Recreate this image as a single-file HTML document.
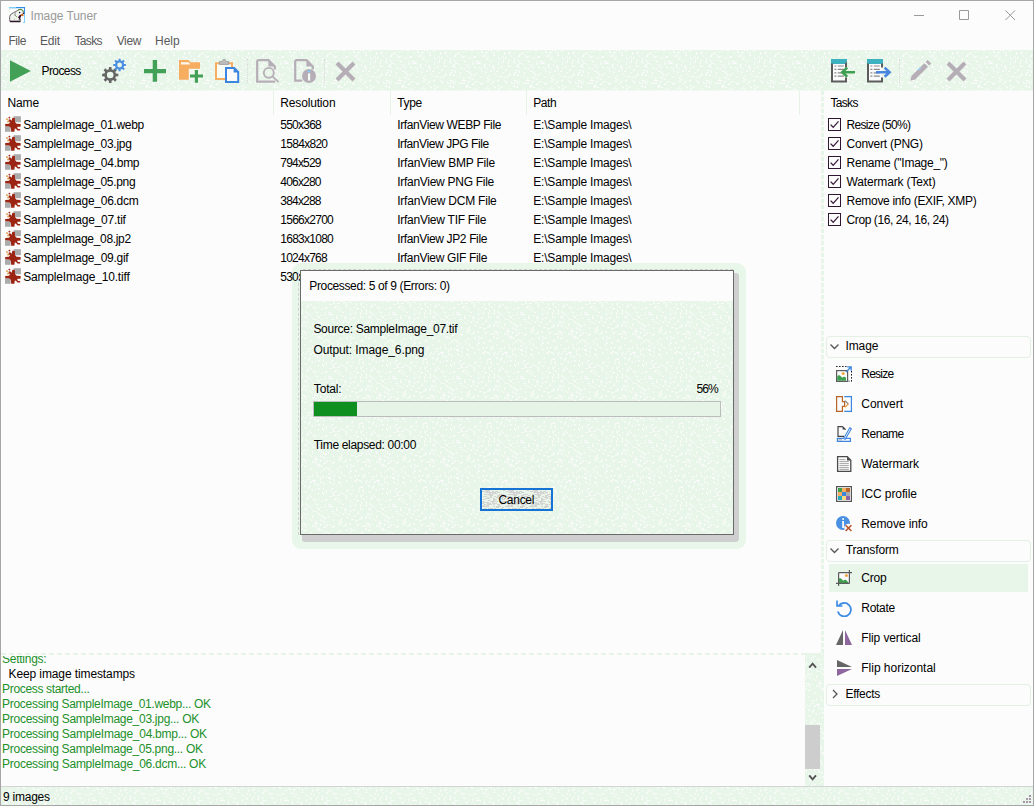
<!DOCTYPE html><html><head><meta charset="utf-8"><title>Image Tuner</title><style>
html,body{margin:0;padding:0}
body{width:1034px;height:806px;overflow:hidden;background:#fcfcfc;font-family:"Liberation Sans", sans-serif;font-size:12px;position:relative}
.a{position:absolute;display:block}
.t{position:absolute;white-space:pre;line-height:16px;height:16px;font-size:12px;color:#000}
.hdr{position:absolute;left:826px;width:205px;height:20px;border:1px solid #e3f1e4;border-radius:4px;box-sizing:border-box}
.cb{position:absolute;left:828px;width:13px;height:13px;box-sizing:border-box;border:1px solid #2e1530;background:#fcfcfc}

</style></head><body>
<svg width="0" height="0" style="position:absolute"><defs><pattern id="dz" width="64" height="64" patternUnits="userSpaceOnUse"><rect width="64" height="64" fill="#e8f6e9"/><path d="M0 12h1v1h-1zM0 24h1v1h-1zM0 36h1v1h-1zM0 53h1v1h-1zM1 3h1v1h-1zM1 8h1v1h-1zM1 9h1v1h-1zM1 10h1v1h-1zM1 11h1v1h-1zM1 12h1v1h-1zM1 22h1v1h-1zM1 24h1v1h-1zM1 25h1v1h-1zM1 30h1v1h-1zM1 32h1v1h-1zM1 33h1v1h-1zM1 35h1v1h-1zM1 36h1v1h-1zM1 52h1v1h-1zM1 54h1v1h-1zM2 20h1v1h-1zM2 22h1v1h-1zM2 30h1v1h-1zM2 51h1v1h-1zM3 16h1v1h-1zM3 20h1v1h-1zM3 22h1v1h-1zM3 30h1v1h-1zM3 31h1v1h-1zM3 37h1v1h-1zM3 44h1v1h-1zM3 56h1v1h-1zM3 57h1v1h-1zM4 15h1v1h-1zM4 16h1v1h-1zM4 20h1v1h-1zM4 24h1v1h-1zM4 25h1v1h-1zM4 31h1v1h-1zM4 32h1v1h-1zM4 34h1v1h-1zM4 36h1v1h-1zM4 37h1v1h-1zM4 43h1v1h-1zM4 52h1v1h-1zM4 57h1v1h-1zM4 62h1v1h-1zM4 63h1v1h-1zM5 6h1v1h-1zM5 10h1v1h-1zM5 11h1v1h-1zM5 14h1v1h-1zM5 15h1v1h-1zM5 16h1v1h-1zM5 25h1v1h-1zM5 33h1v1h-1zM5 47h1v1h-1zM5 52h1v1h-1zM5 63h1v1h-1zM6 4h1v1h-1zM6 5h1v1h-1zM6 6h1v1h-1zM6 11h1v1h-1zM6 13h1v1h-1zM6 17h1v1h-1zM6 20h1v1h-1zM6 21h1v1h-1zM6 22h1v1h-1zM6 31h1v1h-1zM6 48h1v1h-1zM7 4h1v1h-1zM7 13h1v1h-1zM7 48h1v1h-1zM7 50h1v1h-1zM7 58h1v1h-1zM7 59h1v1h-1zM8 2h1v1h-1zM8 4h1v1h-1zM8 13h1v1h-1zM8 47h1v1h-1zM8 50h1v1h-1zM8 56h1v1h-1zM8 57h1v1h-1zM8 58h1v1h-1zM9 3h1v1h-1zM9 26h1v1h-1zM9 40h1v1h-1zM9 47h1v1h-1zM9 52h1v1h-1zM9 53h1v1h-1zM10 3h1v1h-1zM10 14h1v1h-1zM10 27h1v1h-1zM10 39h1v1h-1zM10 53h1v1h-1zM10 60h1v1h-1zM11 17h1v1h-1zM11 22h1v1h-1zM11 23h1v1h-1zM11 24h1v1h-1zM11 32h1v1h-1zM11 33h1v1h-1zM11 45h1v1h-1zM11 46h1v1h-1zM11 47h1v1h-1zM11 51h1v1h-1zM11 60h1v1h-1zM11 61h1v1h-1zM12 5h1v1h-1zM12 6h1v1h-1zM12 7h1v1h-1zM12 18h1v1h-1zM12 33h1v1h-1zM12 51h1v1h-1zM12 52h1v1h-1zM13 18h1v1h-1zM13 30h1v1h-1zM13 32h1v1h-1zM13 51h1v1h-1zM13 52h1v1h-1zM13 54h1v1h-1zM14 6h1v1h-1zM14 7h1v1h-1zM14 10h1v1h-1zM14 27h1v1h-1zM14 29h1v1h-1zM14 30h1v1h-1zM14 33h1v1h-1zM14 51h1v1h-1zM14 54h1v1h-1zM14 55h1v1h-1zM14 59h1v1h-1zM14 60h1v1h-1zM15 6h1v1h-1zM15 11h1v1h-1zM15 18h1v1h-1zM15 28h1v1h-1zM15 30h1v1h-1zM15 33h1v1h-1zM15 43h1v1h-1zM15 44h1v1h-1zM16 1h1v1h-1zM16 11h1v1h-1zM16 14h1v1h-1zM16 19h1v1h-1zM16 30h1v1h-1zM16 31h1v1h-1zM16 36h1v1h-1zM16 44h1v1h-1zM16 46h1v1h-1zM16 47h1v1h-1zM16 55h1v1h-1zM16 56h1v1h-1zM17 0h1v1h-1zM17 15h1v1h-1zM17 16h1v1h-1zM17 21h1v1h-1zM17 35h1v1h-1zM17 36h1v1h-1zM17 37h1v1h-1zM17 47h1v1h-1zM17 55h1v1h-1zM17 59h1v1h-1zM17 60h1v1h-1zM18 16h1v1h-1zM18 20h1v1h-1zM18 21h1v1h-1zM18 35h1v1h-1zM18 37h1v1h-1zM18 59h1v1h-1zM19 14h1v1h-1zM19 26h1v1h-1zM19 27h1v1h-1zM19 31h1v1h-1zM19 32h1v1h-1zM19 36h1v1h-1zM19 43h1v1h-1zM19 49h1v1h-1zM19 50h1v1h-1zM19 52h1v1h-1zM19 53h1v1h-1zM20 18h1v1h-1zM20 21h1v1h-1zM20 22h1v1h-1zM20 23h1v1h-1zM20 31h1v1h-1zM20 37h1v1h-1zM20 42h1v1h-1zM20 47h1v1h-1zM20 53h1v1h-1zM21 0h1v1h-1zM21 7h1v1h-1zM21 8h1v1h-1zM21 17h1v1h-1zM21 27h1v1h-1zM21 28h1v1h-1zM21 37h1v1h-1zM21 48h1v1h-1zM21 63h1v1h-1zM22 0h1v1h-1zM22 23h1v1h-1zM22 24h1v1h-1zM22 25h1v1h-1zM22 40h1v1h-1zM22 41h1v1h-1zM22 47h1v1h-1zM22 48h1v1h-1zM22 53h1v1h-1zM22 54h1v1h-1zM22 55h1v1h-1zM22 59h1v1h-1zM22 60h1v1h-1zM23 0h1v1h-1zM23 12h1v1h-1zM23 14h1v1h-1zM23 28h1v1h-1zM23 29h1v1h-1zM23 33h1v1h-1zM23 34h1v1h-1zM23 40h1v1h-1zM24 1h1v1h-1zM24 7h1v1h-1zM24 11h1v1h-1zM24 13h1v1h-1zM24 24h1v1h-1zM24 25h1v1h-1zM24 34h1v1h-1zM24 38h1v1h-1zM25 6h1v1h-1zM25 7h1v1h-1zM25 17h1v1h-1zM25 25h1v1h-1zM25 32h1v1h-1zM25 39h1v1h-1zM25 47h1v1h-1zM25 48h1v1h-1zM25 61h1v1h-1zM25 62h1v1h-1zM25 63h1v1h-1zM26 6h1v1h-1zM26 17h1v1h-1zM26 31h1v1h-1zM26 32h1v1h-1zM26 39h1v1h-1zM27 11h1v1h-1zM27 13h1v1h-1zM27 23h1v1h-1zM27 24h1v1h-1zM27 39h1v1h-1zM27 40h1v1h-1zM27 44h1v1h-1zM27 48h1v1h-1zM28 3h1v1h-1zM28 11h1v1h-1zM28 13h1v1h-1zM28 31h1v1h-1zM28 40h1v1h-1zM28 41h1v1h-1zM28 44h1v1h-1zM28 45h1v1h-1zM28 48h1v1h-1zM28 49h1v1h-1zM28 53h1v1h-1zM28 61h1v1h-1zM29 3h1v1h-1zM29 11h1v1h-1zM29 13h1v1h-1zM29 32h1v1h-1zM29 48h1v1h-1zM29 49h1v1h-1zM29 50h1v1h-1zM29 53h1v1h-1zM29 54h1v1h-1zM29 62h1v1h-1zM30 12h1v1h-1zM30 13h1v1h-1zM30 17h1v1h-1zM30 37h1v1h-1zM30 42h1v1h-1zM30 43h1v1h-1zM30 59h1v1h-1zM30 62h1v1h-1zM31 13h1v1h-1zM31 18h1v1h-1zM31 33h1v1h-1zM31 42h1v1h-1zM31 59h1v1h-1zM31 60h1v1h-1zM32 0h1v1h-1zM32 1h1v1h-1zM32 2h1v1h-1zM32 18h1v1h-1zM32 20h1v1h-1zM32 26h1v1h-1zM32 27h1v1h-1zM32 33h1v1h-1zM32 34h1v1h-1zM32 50h1v1h-1zM32 54h1v1h-1zM32 55h1v1h-1zM32 63h1v1h-1zM33 2h1v1h-1zM33 6h1v1h-1zM33 21h1v1h-1zM33 33h1v1h-1zM33 45h1v1h-1zM33 46h1v1h-1zM33 47h1v1h-1zM33 51h1v1h-1zM33 63h1v1h-1zM34 5h1v1h-1zM34 6h1v1h-1zM34 62h1v1h-1zM35 14h1v1h-1zM35 15h1v1h-1zM35 16h1v1h-1zM35 17h1v1h-1zM35 56h1v1h-1zM35 61h1v1h-1zM36 2h1v1h-1zM36 4h1v1h-1zM36 5h1v1h-1zM36 6h1v1h-1zM36 8h1v1h-1zM36 17h1v1h-1zM36 21h1v1h-1zM36 22h1v1h-1zM36 39h1v1h-1zM36 40h1v1h-1zM36 41h1v1h-1zM36 43h1v1h-1zM37 2h1v1h-1zM37 9h1v1h-1zM37 22h1v1h-1zM37 30h1v1h-1zM37 42h1v1h-1zM37 47h1v1h-1zM37 53h1v1h-1zM38 2h1v1h-1zM38 7h1v1h-1zM38 9h1v1h-1zM38 19h1v1h-1zM38 27h1v1h-1zM38 28h1v1h-1zM38 31h1v1h-1zM38 37h1v1h-1zM38 38h1v1h-1zM38 48h1v1h-1zM38 53h1v1h-1zM38 54h1v1h-1zM39 0h1v1h-1zM39 7h1v1h-1zM39 28h1v1h-1zM39 31h1v1h-1zM39 38h1v1h-1zM39 44h1v1h-1zM39 48h1v1h-1zM39 49h1v1h-1zM39 53h1v1h-1zM39 57h1v1h-1zM39 63h1v1h-1zM40 10h1v1h-1zM40 14h1v1h-1zM40 15h1v1h-1zM40 25h1v1h-1zM40 26h1v1h-1zM40 28h1v1h-1zM40 29h1v1h-1zM40 30h1v1h-1zM40 42h1v1h-1zM40 43h1v1h-1zM40 45h1v1h-1zM40 56h1v1h-1zM41 0h1v1h-1zM41 11h1v1h-1zM41 21h1v1h-1zM42 1h1v1h-1zM42 11h1v1h-1zM42 20h1v1h-1zM42 21h1v1h-1zM42 33h1v1h-1zM42 46h1v1h-1zM43 1h1v1h-1zM43 15h1v1h-1zM43 17h1v1h-1zM43 32h1v1h-1zM43 46h1v1h-1zM43 47h1v1h-1zM44 5h1v1h-1zM44 15h1v1h-1zM44 16h1v1h-1zM44 17h1v1h-1zM44 19h1v1h-1zM44 31h1v1h-1zM44 32h1v1h-1zM45 2h1v1h-1zM45 3h1v1h-1zM45 4h1v1h-1zM45 5h1v1h-1zM45 17h1v1h-1zM45 20h1v1h-1zM45 23h1v1h-1zM45 31h1v1h-1zM45 36h1v1h-1zM45 37h1v1h-1zM45 51h1v1h-1zM45 52h1v1h-1zM45 62h1v1h-1zM46 24h1v1h-1zM46 37h1v1h-1zM46 52h1v1h-1zM46 60h1v1h-1zM46 61h1v1h-1zM46 63h1v1h-1zM47 21h1v1h-1zM47 25h1v1h-1zM47 44h1v1h-1zM47 61h1v1h-1zM48 0h1v1h-1zM48 20h1v1h-1zM48 21h1v1h-1zM48 30h1v1h-1zM48 43h1v1h-1zM48 44h1v1h-1zM48 48h1v1h-1zM49 1h1v1h-1zM49 7h1v1h-1zM49 8h1v1h-1zM49 12h1v1h-1zM49 13h1v1h-1zM49 14h1v1h-1zM49 17h1v1h-1zM49 30h1v1h-1zM49 31h1v1h-1zM49 35h1v1h-1zM49 36h1v1h-1zM49 39h1v1h-1zM49 41h1v1h-1zM49 42h1v1h-1zM49 48h1v1h-1zM50 1h1v1h-1zM50 18h1v1h-1zM50 26h1v1h-1zM50 36h1v1h-1zM50 38h1v1h-1zM50 42h1v1h-1zM50 48h1v1h-1zM50 57h1v1h-1zM51 9h1v1h-1zM51 26h1v1h-1zM51 36h1v1h-1zM51 56h1v1h-1zM51 57h1v1h-1zM51 61h1v1h-1zM52 12h1v1h-1zM52 16h1v1h-1zM52 17h1v1h-1zM52 26h1v1h-1zM52 37h1v1h-1zM52 60h1v1h-1zM53 6h1v1h-1zM53 16h1v1h-1zM53 23h1v1h-1zM53 37h1v1h-1zM53 47h1v1h-1zM53 52h1v1h-1zM54 7h1v1h-1zM54 10h1v1h-1zM54 11h1v1h-1zM54 12h1v1h-1zM54 22h1v1h-1zM54 27h1v1h-1zM54 41h1v1h-1zM54 42h1v1h-1zM54 46h1v1h-1zM54 47h1v1h-1zM54 51h1v1h-1zM54 52h1v1h-1zM55 2h1v1h-1zM55 3h1v1h-1zM55 4h1v1h-1zM55 27h1v1h-1zM55 30h1v1h-1zM55 41h1v1h-1zM55 50h1v1h-1zM55 51h1v1h-1zM56 7h1v1h-1zM56 8h1v1h-1zM56 20h1v1h-1zM56 27h1v1h-1zM56 31h1v1h-1zM56 32h1v1h-1zM56 50h1v1h-1zM57 7h1v1h-1zM57 19h1v1h-1zM57 20h1v1h-1zM57 31h1v1h-1zM57 32h1v1h-1zM57 46h1v1h-1zM57 47h1v1h-1zM57 51h1v1h-1zM57 61h1v1h-1zM58 26h1v1h-1zM58 46h1v1h-1zM58 51h1v1h-1zM58 58h1v1h-1zM58 59h1v1h-1zM58 61h1v1h-1zM58 62h1v1h-1zM59 2h1v1h-1zM59 3h1v1h-1zM59 11h1v1h-1zM59 12h1v1h-1zM59 13h1v1h-1zM59 15h1v1h-1zM59 16h1v1h-1zM59 26h1v1h-1zM59 40h1v1h-1zM59 51h1v1h-1zM59 58h1v1h-1zM60 3h1v1h-1zM60 9h1v1h-1zM60 10h1v1h-1zM60 16h1v1h-1zM60 23h1v1h-1zM60 24h1v1h-1zM60 25h1v1h-1zM60 38h1v1h-1zM60 52h1v1h-1zM60 53h1v1h-1zM60 58h1v1h-1zM61 1h1v1h-1zM61 2h1v1h-1zM61 5h1v1h-1zM61 16h1v1h-1zM61 24h1v1h-1zM61 39h1v1h-1zM61 40h1v1h-1zM61 46h1v1h-1zM61 49h1v1h-1zM61 57h1v1h-1zM61 58h1v1h-1zM61 61h1v1h-1zM62 6h1v1h-1zM62 32h1v1h-1zM62 33h1v1h-1zM62 40h1v1h-1zM62 47h1v1h-1zM62 48h1v1h-1zM62 60h1v1h-1zM62 61h1v1h-1zM62 62h1v1h-1zM62 63h1v1h-1zM63 33h1v1h-1zM63 45h1v1h-1zM63 46h1v1h-1zM63 47h1v1h-1zM63 63h1v1h-1z" fill="#fbfbfb"/></pattern><pattern id="dg" width="24" height="24" patternUnits="userSpaceOnUse"><rect width="24" height="24" fill="#eaf5ea"/><path d="M0 1h1v1h-1zM0 11h1v1h-1zM0 13h1v1h-1zM0 16h1v1h-1zM0 19h1v1h-1zM0 20h1v1h-1zM0 22h1v1h-1zM1 1h1v1h-1zM1 6h1v1h-1zM1 9h1v1h-1zM1 11h1v1h-1zM1 12h1v1h-1zM1 13h1v1h-1zM1 15h1v1h-1zM1 16h1v1h-1zM1 19h1v1h-1zM1 20h1v1h-1zM1 21h1v1h-1zM2 1h1v1h-1zM2 4h1v1h-1zM2 6h1v1h-1zM2 9h1v1h-1zM2 12h1v1h-1zM2 14h1v1h-1zM2 15h1v1h-1zM2 16h1v1h-1zM2 18h1v1h-1zM2 19h1v1h-1zM2 20h1v1h-1zM2 21h1v1h-1zM2 23h1v1h-1zM3 0h1v1h-1zM3 2h1v1h-1zM3 4h1v1h-1zM3 6h1v1h-1zM3 8h1v1h-1zM3 12h1v1h-1zM3 14h1v1h-1zM3 16h1v1h-1zM3 18h1v1h-1zM3 19h1v1h-1zM3 20h1v1h-1zM3 23h1v1h-1zM4 0h1v1h-1zM4 1h1v1h-1zM4 2h1v1h-1zM4 4h1v1h-1zM4 6h1v1h-1zM4 8h1v1h-1zM4 12h1v1h-1zM4 15h1v1h-1zM4 16h1v1h-1zM4 20h1v1h-1zM5 0h1v1h-1zM5 1h1v1h-1zM5 2h1v1h-1zM5 4h1v1h-1zM5 7h1v1h-1zM5 8h1v1h-1zM5 12h1v1h-1zM5 13h1v1h-1zM5 14h1v1h-1zM5 15h1v1h-1zM5 16h1v1h-1zM5 19h1v1h-1zM5 20h1v1h-1zM6 0h1v1h-1zM6 1h1v1h-1zM6 2h1v1h-1zM6 4h1v1h-1zM6 7h1v1h-1zM6 8h1v1h-1zM6 10h1v1h-1zM6 12h1v1h-1zM6 13h1v1h-1zM6 14h1v1h-1zM6 15h1v1h-1zM6 16h1v1h-1zM6 18h1v1h-1zM6 19h1v1h-1zM6 20h1v1h-1zM7 0h1v1h-1zM7 1h1v1h-1zM7 2h1v1h-1zM7 3h1v1h-1zM7 4h1v1h-1zM7 5h1v1h-1zM7 8h1v1h-1zM7 10h1v1h-1zM7 13h1v1h-1zM7 14h1v1h-1zM7 18h1v1h-1zM7 20h1v1h-1zM7 23h1v1h-1zM8 2h1v1h-1zM8 3h1v1h-1zM8 4h1v1h-1zM8 5h1v1h-1zM8 6h1v1h-1zM8 7h1v1h-1zM8 11h1v1h-1zM8 13h1v1h-1zM8 14h1v1h-1zM8 18h1v1h-1zM8 19h1v1h-1zM8 20h1v1h-1zM8 21h1v1h-1zM8 23h1v1h-1zM9 2h1v1h-1zM9 4h1v1h-1zM9 5h1v1h-1zM9 6h1v1h-1zM9 7h1v1h-1zM9 11h1v1h-1zM9 14h1v1h-1zM9 18h1v1h-1zM9 19h1v1h-1zM9 21h1v1h-1zM9 23h1v1h-1zM10 1h1v1h-1zM10 2h1v1h-1zM10 3h1v1h-1zM10 4h1v1h-1zM10 5h1v1h-1zM10 11h1v1h-1zM10 12h1v1h-1zM10 13h1v1h-1zM10 18h1v1h-1zM10 19h1v1h-1zM10 23h1v1h-1zM11 1h1v1h-1zM11 2h1v1h-1zM11 3h1v1h-1zM11 8h1v1h-1zM11 9h1v1h-1zM11 10h1v1h-1zM11 11h1v1h-1zM11 12h1v1h-1zM11 13h1v1h-1zM11 14h1v1h-1zM11 16h1v1h-1zM11 19h1v1h-1zM11 23h1v1h-1zM12 2h1v1h-1zM12 3h1v1h-1zM12 6h1v1h-1zM12 8h1v1h-1zM12 9h1v1h-1zM12 10h1v1h-1zM12 11h1v1h-1zM12 13h1v1h-1zM12 14h1v1h-1zM12 16h1v1h-1zM12 18h1v1h-1zM12 19h1v1h-1zM12 20h1v1h-1zM12 21h1v1h-1zM12 23h1v1h-1zM13 1h1v1h-1zM13 2h1v1h-1zM13 3h1v1h-1zM13 6h1v1h-1zM13 9h1v1h-1zM13 11h1v1h-1zM13 13h1v1h-1zM13 18h1v1h-1zM13 19h1v1h-1zM13 20h1v1h-1zM13 21h1v1h-1zM13 23h1v1h-1zM14 1h1v1h-1zM14 3h1v1h-1zM14 7h1v1h-1zM14 9h1v1h-1zM14 11h1v1h-1zM14 13h1v1h-1zM14 16h1v1h-1zM14 17h1v1h-1zM15 1h1v1h-1zM15 2h1v1h-1zM15 5h1v1h-1zM15 6h1v1h-1zM15 7h1v1h-1zM15 11h1v1h-1zM15 14h1v1h-1zM15 16h1v1h-1zM15 17h1v1h-1zM16 2h1v1h-1zM16 5h1v1h-1zM16 6h1v1h-1zM16 7h1v1h-1zM16 8h1v1h-1zM16 14h1v1h-1zM16 15h1v1h-1zM16 16h1v1h-1zM16 17h1v1h-1zM16 21h1v1h-1zM17 2h1v1h-1zM17 4h1v1h-1zM17 5h1v1h-1zM17 7h1v1h-1zM17 8h1v1h-1zM17 14h1v1h-1zM17 15h1v1h-1zM17 16h1v1h-1zM17 20h1v1h-1zM17 21h1v1h-1zM18 4h1v1h-1zM18 6h1v1h-1zM18 11h1v1h-1zM18 16h1v1h-1zM18 20h1v1h-1zM18 21h1v1h-1zM18 22h1v1h-1zM19 4h1v1h-1zM19 6h1v1h-1zM19 8h1v1h-1zM19 11h1v1h-1zM19 12h1v1h-1zM19 14h1v1h-1zM19 18h1v1h-1zM19 20h1v1h-1zM19 22h1v1h-1zM19 23h1v1h-1zM20 4h1v1h-1zM20 6h1v1h-1zM20 7h1v1h-1zM20 8h1v1h-1zM20 9h1v1h-1zM20 11h1v1h-1zM20 12h1v1h-1zM20 13h1v1h-1zM20 14h1v1h-1zM20 17h1v1h-1zM20 18h1v1h-1zM20 20h1v1h-1zM20 22h1v1h-1zM20 23h1v1h-1zM21 0h1v1h-1zM21 4h1v1h-1zM21 6h1v1h-1zM21 7h1v1h-1zM21 9h1v1h-1zM21 11h1v1h-1zM21 12h1v1h-1zM21 13h1v1h-1zM21 17h1v1h-1zM21 23h1v1h-1zM22 0h1v1h-1zM22 5h1v1h-1zM22 8h1v1h-1zM22 9h1v1h-1zM22 11h1v1h-1zM22 19h1v1h-1zM22 23h1v1h-1zM23 5h1v1h-1zM23 8h1v1h-1zM23 16h1v1h-1zM23 19h1v1h-1zM23 20h1v1h-1zM23 22h1v1h-1z" fill="#d3d3d3"/></pattern></defs></svg>
<svg class="a" style="left:1px;top:50px;" width="1032" height="40"><rect width="1032" height="40" fill="url(#dz)"/></svg>
<svg class="a" style="left:1px;top:90px;opacity:.5" width="1032" height="1"><rect width="1032" height="1" fill="url(#dz)"/></svg>
<div class="a" style="left:1px;top:786px;width:1032px;height:1px;background:#d4d4d4"></div>
<svg class="a" style="left:1px;top:787px;" width="1032" height="18"><rect width="1032" height="18" fill="url(#dz)"/></svg>
<div class="a" style="left:292px;top:263px;width:454px;height:286px;border-radius:9px;background:#e9f6ea"></div>
<div class="a" style="left:273px;top:91px;width:1px;height:24px;background:#e6f4e7"></div>
<div class="a" style="left:390px;top:91px;width:1px;height:24px;background:#e6f4e7"></div>
<div class="a" style="left:526px;top:91px;width:1px;height:24px;background:#e6f4e7"></div>
<div class="a" style="left:799px;top:91px;width:1px;height:24px;background:#e6f4e7"></div>
<div class="a" style="left:821px;top:91px;width:3px;height:562px;background:repeating-linear-gradient(to bottom,#e7f5e8 0,#e7f5e8 4px,#f8fbf8 4px,#f8fbf8 6px)"></div>
<div class="a" style="left:1px;top:653px;width:804px;height:2px;background:repeating-linear-gradient(to right,#e7f5e8 0,#e7f5e8 5px,#fcfcfc 5px,#fcfcfc 8px)"></div>
<svg class="a" style="left:805px;top:653px;" width="19" height="133"><rect width="19" height="133" fill="url(#dz)"/></svg>
<div class="a" style="left:805px;top:725px;width:15px;height:44px;background:#cdcdcd"></div>
<svg class="a" style="left:805px;top:653px" width="17" height="133"><path d="M4.2 14.6l3.4-4 3.4 4M4.2 122.4l3.4 4 3.4-4" fill="none" stroke="#555" stroke-width="1.9"/></svg>
<div class="a" style="left:1px;top:656px;width:804px;height:130px;overflow:hidden;background:#fcfcfc">
<span class="t" style="left:1.1px;top:-5.0px;letter-spacing:-0.267px;color:#22902a;">Settings:</span>
<span class="t" style="left:7.5px;top:10.0px;letter-spacing:-0.106px;">Keep image timestamps</span>
<span class="t" style="left:1.1px;top:25.0px;letter-spacing:-0.337px;color:#22902a;">Process started...</span>
<span class="t" style="left:1.1px;top:40.0px;letter-spacing:-0.299px;color:#22902a;">Processing SampleImage_01.webp... OK</span>
<span class="t" style="left:1.1px;top:55.0px;letter-spacing:-0.282px;color:#22902a;">Processing SampleImage_03.jpg... OK</span>
<span class="t" style="left:1.1px;top:70.0px;letter-spacing:-0.272px;color:#22902a;">Processing SampleImage_04.bmp... OK</span>
<span class="t" style="left:1.1px;top:85.0px;letter-spacing:-0.291px;color:#22902a;">Processing SampleImage_05.png... OK</span>
<span class="t" style="left:1.1px;top:100.0px;letter-spacing:-0.275px;color:#22902a;">Processing SampleImage_06.dcm... OK</span>
</div>
<div class="a" style="left:829px;top:564px;width:199px;height:28px;background:#e8f5e9"></div>
<div class="hdr" style="top:336px;height:22px"></div>
<div class="hdr" style="top:540px;height:22px"></div>
<div class="hdr" style="top:684px;height:22px"></div>
<svg class="a" style="left:828px;top:340px" width="14" height="14"><path d="M2.5 4.5l4 4 4-4" fill="none" stroke="#555" stroke-width="1.3"/></svg>
<svg class="a" style="left:828px;top:544px" width="14" height="14"><path d="M2.5 4.5l4 4 4-4" fill="none" stroke="#555" stroke-width="1.3"/></svg>
<svg class="a" style="left:828px;top:687px" width="14" height="14"><path d="M5 3l4 4-4 4" fill="none" stroke="#555" stroke-width="1.3"/></svg>
<div class="cb" style="top:118px"></div><svg class="a" style="left:828px;top:118px" width="13" height="13"><path d="M2.6 6.6l2.6 2.7 5.3-6" fill="none" stroke="#3a1a3c" stroke-width="1.25"/></svg>
<div class="cb" style="top:137px"></div><svg class="a" style="left:828px;top:137px" width="13" height="13"><path d="M2.6 6.6l2.6 2.7 5.3-6" fill="none" stroke="#3a1a3c" stroke-width="1.25"/></svg>
<div class="cb" style="top:156px"></div><svg class="a" style="left:828px;top:156px" width="13" height="13"><path d="M2.6 6.6l2.6 2.7 5.3-6" fill="none" stroke="#3a1a3c" stroke-width="1.25"/></svg>
<div class="cb" style="top:175px"></div><svg class="a" style="left:828px;top:175px" width="13" height="13"><path d="M2.6 6.6l2.6 2.7 5.3-6" fill="none" stroke="#3a1a3c" stroke-width="1.25"/></svg>
<div class="cb" style="top:194px"></div><svg class="a" style="left:828px;top:194px" width="13" height="13"><path d="M2.6 6.6l2.6 2.7 5.3-6" fill="none" stroke="#3a1a3c" stroke-width="1.25"/></svg>
<div class="cb" style="top:213px"></div><svg class="a" style="left:828px;top:213px" width="13" height="13"><path d="M2.6 6.6l2.6 2.7 5.3-6" fill="none" stroke="#3a1a3c" stroke-width="1.25"/></svg>
<svg class="a" style="left:9px;top:7px" width="16" height="16"><rect x="0" y="0" width="16" height="16" fill="#fdfdfd"/><path d="M0 0h16v1.2h-16z" fill="#2f8fe6"/><path d="M0 0h7v1.2h-7z" fill="#7fd0f8"/><path d="M15 0h1v16h-1z" fill="#2f8fe6"/><path d="M15 7h1v9h-2.4l1.4-1.4z" fill="#7fd0f8"/><path d="M0 1.4h.6v4h-.6z" fill="#cdeccd"/><path d="M.9 14.4c-.5-2.2-.5-5 .5-6.6 1-1 2.2-1.4 3.2-2.2 1.2-.9 2.6-1.2 3.6-1.8 1-1.2 2.6-1.8 4-1.4 1.5.5 2.3 2 2.2 3.4l-.4 1.4-1.8 1-1 .2-.6 2 .4 2.4.3 1.6z" fill="#f1f1f1" stroke="#555055" stroke-width=".9"/><path d="M1 14.5h10.4" stroke="#2d1528" stroke-width="1.5"/><path d="M10.6 8.2l1.6-.6.2 1.2-1.2 2.2.4 2-1.4-.4-.4-1.6-1-.6z" fill="#33102c"/><path d="M9.2 3.2c1.8-1.4 4.4-.8 5.4 1.6" fill="none" stroke="#5e9a1c" stroke-width=".9"/><path d="M5.6 7.8l1.4 1.6 1 .4M5.4 12l.6.6M9.6 12.2l.4.6M1.3 7.6l.5.3" stroke="#5e9a1c" stroke-width=".8" fill="none"/><path d="M6.6 5.4c-.8 1-.8 2.4 0 3.4" stroke="#777" stroke-width=".8" fill="none"/><circle cx="10.6" cy="5.5" r="1.5" fill="#fff"/><circle cx="10.6" cy="5.6" r=".8" fill="#111"/><circle cx="14.5" cy="6.3" r=".6" fill="#33102c"/><path d="M12 7l2.6.6.2 1-1.6.6-1.4-.8z" fill="#d8691c"/></svg>
<svg class="a" style="left:9px;top:59px" width="24" height="24"><path d="M1 1.3l20.8 10.7-20.8 10.7z" fill="#43a157"/></svg>
<svg class="a" style="left:100px;top:56px" width="30" height="30"><path d="M15.94 17.62L18.30 17.72L18.30 20.28L15.94 20.38L15.23 22.08L16.83 23.82L15.02 25.63L13.28 24.03L11.58 24.74L11.48 27.10L8.92 27.10L8.82 24.74L7.12 24.03L5.38 25.63L3.57 23.82L5.17 22.08L4.46 20.38L2.10 20.28L2.10 17.72L4.46 17.62L5.17 15.92L3.57 14.18L5.38 12.37L7.12 13.97L8.82 13.26L8.92 10.90L11.48 10.90L11.58 13.26L13.28 13.97L15.02 12.37L16.83 14.18L15.23 15.92ZM13.50 19.00A3.3 3.3 0 1 0 6.90 19.00A3.3 3.3 0 1 0 13.50 19.00Z" fill="#666" fill-rule="evenodd"/><path d="M24.07 7.93L25.92 8.00L25.92 10.00L24.07 10.07L23.52 11.40L24.78 12.76L23.36 14.18L22.00 12.92L20.67 13.47L20.60 15.32L18.60 15.32L18.53 13.47L17.20 12.92L15.84 14.18L14.42 12.76L15.68 11.40L15.13 10.07L13.28 10.00L13.28 8.00L15.13 7.93L15.68 6.60L14.42 5.24L15.84 3.82L17.20 5.08L18.53 4.53L18.60 2.68L20.60 2.68L20.67 4.53L22.00 5.08L23.36 3.82L24.78 5.24L23.52 6.60ZM22.00 9.00A2.4 2.4 0 1 0 17.20 9.00A2.4 2.4 0 1 0 22.00 9.00Z" fill="#4a8fdf" fill-rule="evenodd"/></svg>
<svg class="a" style="left:143px;top:59px" width="24" height="24"><path d="M9.7 1h4.4v9h8.9v4.2h-8.9v8.5h-4.4v-8.5h-8.7v-4.2h8.7z" fill="#43a157"/></svg>
<svg class="a" style="left:178px;top:58px" width="28" height="26"><path d="M1 2h9.6l2 2.2h9.4v17.6h-21z" fill="#f6ad60"/><path d="M3 4.2h7.4l1.4 1.4v1h-8.8z" fill="#fdf7ee"/><path d="M10.8 10.8h12.8v11.2h-12.8z" fill="#f3f9f1"/><path d="M16.8 12h3.2v4.6h5v3h-5v5.2h-3.2v-5.2h-4.8v-3h4.8z" fill="#43a157"/></svg>
<svg class="a" style="left:214px;top:58px" width="28" height="26"><path d="M2 5.2h16v15.8h-16z" fill="#f6fbf4" stroke="#f6ad60" stroke-width="2"/><path d="M5.4 6.4v-2.8h2.6l1.4-2.2h1.6l1.4 2.2h2.4v2.8z" fill="#bdbdbd" stroke="#9a9a9a" stroke-width=".8"/><path d="M12 10h8.2l4 4v10h-12.2z" fill="#fbfbfb" stroke="#3d86e0" stroke-width="2"/><path d="M19.6 9.6l4.8 4.8h-4.8z" fill="#3d86e0"/></svg>
<div class="a" style="left:247px;top:59px;width:0;height:24px;border-left:1px dotted #cfc3cf;opacity:.6"></div>
<div class="a" style="left:324px;top:59px;width:0;height:24px;border-left:1px dotted #cfc3cf;opacity:.6"></div>
<div class="a" style="left:899px;top:59px;width:0;height:24px;border-left:1px dotted #cfc3cf;opacity:.6"></div>
<svg class="a" style="left:255px;top:58px" width="28" height="26"><path d="M2.2 2.2h11.4l6.2 6.2v3M2.2 2.2v21.4h18" fill="none" stroke="#b6aeb6" stroke-width="2.2"/><path d="M13.4 2.2v6.4h6.4z" fill="#b6aeb6"/><circle cx="13.8" cy="14.8" r="5" fill="none" stroke="#b6aeb6" stroke-width="1.8"/><path d="M17.6 18.6l6 5.6" stroke="#b6aeb6" stroke-width="1.8"/></svg>
<svg class="a" style="left:293px;top:58px" width="28" height="26"><path d="M2.2 2.2h11.4l6.2 6.2v3M2.2 2.2v20.4h7" fill="none" stroke="#b6aeb6" stroke-width="2.2"/><path d="M13.4 2.2v6.4h6.4z" fill="#b6aeb6"/><circle cx="16" cy="18" r="7" fill="#b6aeb6"/><path d="M15 15.4h2.2v7.2h-2.2z" fill="#f4fbf4"/><circle cx="16.1" cy="13.2" r="1.2" fill="#7fc8f4"/></svg>
<svg class="a" style="left:333.6px;top:59.8px" width="24" height="24"><path d="M3 3l17 17M20 3l-17 17" stroke="#b6aeb6" stroke-width="4.2"/></svg>
<svg class="a" style="left:829px;top:57px" width="30" height="28"><path d="M3 6.4h14v18h-14z" fill="#fbfbfb"/><path d="M2 2h16v5h-16z" fill="#3fb2c2"/><path d="M18 6.4h-1.6M3 6.4v18h14v-4M17 10.4v-4" fill="none" stroke="#5c5c5c" stroke-width="2"/><path d="M5.4 9.0h2M8.8 9.0h6" stroke="#8a8a8a" stroke-width="1.2"/><path d="M5.4 12.4h2M8.8 12.4h6" stroke="#8a8a8a" stroke-width="1.2"/><path d="M5.4 15.8h2M8.8 15.8h6" stroke="#8a8a8a" stroke-width="1.2"/><path d="M5.4 19.2h2M8.8 19.2h6" stroke="#8a8a8a" stroke-width="1.2"/><path d="M26 15.2h-11M18.2 10.6l-5 4.6 5 4.6" fill="none" stroke="#3f9f50" stroke-width="2.6"/></svg>
<svg class="a" style="left:865px;top:57px" width="30" height="28"><path d="M3 6.4h14v18h-14z" fill="#fbfbfb"/><path d="M2 2h16v5h-16z" fill="#3fb2c2"/><path d="M3 6.4v18h14v-4M17 10.4v-4" fill="none" stroke="#5c5c5c" stroke-width="2"/><path d="M5.4 9.0h2M8.8 9.0h6" stroke="#8a8a8a" stroke-width="1.2"/><path d="M5.4 12.4h2M8.8 12.4h6" stroke="#8a8a8a" stroke-width="1.2"/><path d="M5.4 15.8h2M8.8 15.8h6" stroke="#8a8a8a" stroke-width="1.2"/><path d="M5.4 19.2h2M8.8 19.2h6" stroke="#8a8a8a" stroke-width="1.2"/><path d="M11 15.2h12M19.6 10.6l5 4.6-5 4.6" fill="none" stroke="#4a86de" stroke-width="2.6"/></svg>
<svg class="a" style="left:908px;top:58px" width="26" height="26"><path d="M2.2 22.8l1.4-5 12.8-12.6 3.6 3.6-12.8 12.6z" fill="#b6aeb6"/><path d="M17.6 4l2-2 3.6 3.6-2 2z" fill="#b6aeb6"/><path d="M9.4 11.4l2.6-2.4 1.2 1.2-2.6 2.4z" fill="#9ed4f2"/></svg>
<svg class="a" style="left:944.7px;top:59.6px" width="24" height="24"><path d="M3 3l17 17M20 3l-17 17" stroke="#b6aeb6" stroke-width="4.2"/></svg>
<svg class="a" style="left:5px;top:116px" width="16" height="16"><rect x="8.6" y="0.2" width="7.3" height="6" fill="#ababab"/><rect x="0" y="10.4" width="5.6" height="5.4" fill="#ababab"/><path d="M.2 7.9v2.4l4.3.2 1.3 1.3.4 3.9h3.2l.4-3.3 1.2.3 1.5 1.8h2.6l.1-1.5-2.2-.1-.8-1.4.3-.8h3.1v-2.8l-4.1-.2-1.5-1.6-.2-4-2.4-.4-1 3.8-1.4.8-1 1.4z" fill="#9c2412"/><path d="M3.4 3.6l1.6-.4 1.6 1.4.4 1.6-1.8.6-1.2-1.6z" fill="#9c2412"/><circle cx="4.4" cy="1.6" r="0.9" fill="#9c2412"/><circle cx="2" cy="3.1" r="0.9" fill="#e08a2a"/><circle cx="3.1" cy="5.5" r="0.9" fill="#e08a2a"/><circle cx="3.6" cy="3.4" r=".6" fill="#d8d8d8"/></svg>
<svg class="a" style="left:5px;top:135px" width="16" height="16"><rect x="8.6" y="0.2" width="7.3" height="6" fill="#ababab"/><rect x="0" y="10.4" width="5.6" height="5.4" fill="#ababab"/><path d="M.2 7.9v2.4l4.3.2 1.3 1.3.4 3.9h3.2l.4-3.3 1.2.3 1.5 1.8h2.6l.1-1.5-2.2-.1-.8-1.4.3-.8h3.1v-2.8l-4.1-.2-1.5-1.6-.2-4-2.4-.4-1 3.8-1.4.8-1 1.4z" fill="#9c2412"/><path d="M3.4 3.6l1.6-.4 1.6 1.4.4 1.6-1.8.6-1.2-1.6z" fill="#9c2412"/><circle cx="4.4" cy="1.6" r="0.9" fill="#9c2412"/><circle cx="2" cy="3.1" r="0.9" fill="#e08a2a"/><circle cx="3.1" cy="5.5" r="0.9" fill="#e08a2a"/><circle cx="3.6" cy="3.4" r=".6" fill="#d8d8d8"/></svg>
<svg class="a" style="left:5px;top:154px" width="16" height="16"><rect x="8.6" y="0.2" width="7.3" height="6" fill="#ababab"/><rect x="0" y="10.4" width="5.6" height="5.4" fill="#ababab"/><path d="M.2 7.9v2.4l4.3.2 1.3 1.3.4 3.9h3.2l.4-3.3 1.2.3 1.5 1.8h2.6l.1-1.5-2.2-.1-.8-1.4.3-.8h3.1v-2.8l-4.1-.2-1.5-1.6-.2-4-2.4-.4-1 3.8-1.4.8-1 1.4z" fill="#9c2412"/><path d="M3.4 3.6l1.6-.4 1.6 1.4.4 1.6-1.8.6-1.2-1.6z" fill="#9c2412"/><circle cx="4.4" cy="1.6" r="0.9" fill="#9c2412"/><circle cx="2" cy="3.1" r="0.9" fill="#e08a2a"/><circle cx="3.1" cy="5.5" r="0.9" fill="#e08a2a"/><circle cx="3.6" cy="3.4" r=".6" fill="#d8d8d8"/></svg>
<svg class="a" style="left:5px;top:173px" width="16" height="16"><rect x="8.6" y="0.2" width="7.3" height="6" fill="#ababab"/><rect x="0" y="10.4" width="5.6" height="5.4" fill="#ababab"/><path d="M.2 7.9v2.4l4.3.2 1.3 1.3.4 3.9h3.2l.4-3.3 1.2.3 1.5 1.8h2.6l.1-1.5-2.2-.1-.8-1.4.3-.8h3.1v-2.8l-4.1-.2-1.5-1.6-.2-4-2.4-.4-1 3.8-1.4.8-1 1.4z" fill="#9c2412"/><path d="M3.4 3.6l1.6-.4 1.6 1.4.4 1.6-1.8.6-1.2-1.6z" fill="#9c2412"/><circle cx="4.4" cy="1.6" r="0.9" fill="#9c2412"/><circle cx="2" cy="3.1" r="0.9" fill="#e08a2a"/><circle cx="3.1" cy="5.5" r="0.9" fill="#e08a2a"/><circle cx="3.6" cy="3.4" r=".6" fill="#d8d8d8"/></svg>
<svg class="a" style="left:5px;top:192px" width="16" height="16"><rect x="8.6" y="0.2" width="7.3" height="6" fill="#ababab"/><rect x="0" y="10.4" width="5.6" height="5.4" fill="#ababab"/><path d="M.2 7.9v2.4l4.3.2 1.3 1.3.4 3.9h3.2l.4-3.3 1.2.3 1.5 1.8h2.6l.1-1.5-2.2-.1-.8-1.4.3-.8h3.1v-2.8l-4.1-.2-1.5-1.6-.2-4-2.4-.4-1 3.8-1.4.8-1 1.4z" fill="#9c2412"/><path d="M3.4 3.6l1.6-.4 1.6 1.4.4 1.6-1.8.6-1.2-1.6z" fill="#9c2412"/><circle cx="4.4" cy="1.6" r="0.9" fill="#9c2412"/><circle cx="2" cy="3.1" r="0.9" fill="#e08a2a"/><circle cx="3.1" cy="5.5" r="0.9" fill="#e08a2a"/><circle cx="3.6" cy="3.4" r=".6" fill="#d8d8d8"/></svg>
<svg class="a" style="left:5px;top:211px" width="16" height="16"><rect x="8.6" y="0.2" width="7.3" height="6" fill="#ababab"/><rect x="0" y="10.4" width="5.6" height="5.4" fill="#ababab"/><path d="M.2 7.9v2.4l4.3.2 1.3 1.3.4 3.9h3.2l.4-3.3 1.2.3 1.5 1.8h2.6l.1-1.5-2.2-.1-.8-1.4.3-.8h3.1v-2.8l-4.1-.2-1.5-1.6-.2-4-2.4-.4-1 3.8-1.4.8-1 1.4z" fill="#9c2412"/><path d="M3.4 3.6l1.6-.4 1.6 1.4.4 1.6-1.8.6-1.2-1.6z" fill="#9c2412"/><circle cx="4.4" cy="1.6" r="0.9" fill="#9c2412"/><circle cx="2" cy="3.1" r="0.9" fill="#e08a2a"/><circle cx="3.1" cy="5.5" r="0.9" fill="#e08a2a"/><circle cx="3.6" cy="3.4" r=".6" fill="#d8d8d8"/></svg>
<svg class="a" style="left:5px;top:230px" width="16" height="16"><rect x="8.6" y="0.2" width="7.3" height="6" fill="#ababab"/><rect x="0" y="10.4" width="5.6" height="5.4" fill="#ababab"/><path d="M.2 7.9v2.4l4.3.2 1.3 1.3.4 3.9h3.2l.4-3.3 1.2.3 1.5 1.8h2.6l.1-1.5-2.2-.1-.8-1.4.3-.8h3.1v-2.8l-4.1-.2-1.5-1.6-.2-4-2.4-.4-1 3.8-1.4.8-1 1.4z" fill="#9c2412"/><path d="M3.4 3.6l1.6-.4 1.6 1.4.4 1.6-1.8.6-1.2-1.6z" fill="#9c2412"/><circle cx="4.4" cy="1.6" r="0.9" fill="#9c2412"/><circle cx="2" cy="3.1" r="0.9" fill="#e08a2a"/><circle cx="3.1" cy="5.5" r="0.9" fill="#e08a2a"/><circle cx="3.6" cy="3.4" r=".6" fill="#d8d8d8"/></svg>
<svg class="a" style="left:5px;top:249px" width="16" height="16"><rect x="8.6" y="0.2" width="7.3" height="6" fill="#ababab"/><rect x="0" y="10.4" width="5.6" height="5.4" fill="#ababab"/><path d="M.2 7.9v2.4l4.3.2 1.3 1.3.4 3.9h3.2l.4-3.3 1.2.3 1.5 1.8h2.6l.1-1.5-2.2-.1-.8-1.4.3-.8h3.1v-2.8l-4.1-.2-1.5-1.6-.2-4-2.4-.4-1 3.8-1.4.8-1 1.4z" fill="#9c2412"/><path d="M3.4 3.6l1.6-.4 1.6 1.4.4 1.6-1.8.6-1.2-1.6z" fill="#9c2412"/><circle cx="4.4" cy="1.6" r="0.9" fill="#9c2412"/><circle cx="2" cy="3.1" r="0.9" fill="#e08a2a"/><circle cx="3.1" cy="5.5" r="0.9" fill="#e08a2a"/><circle cx="3.6" cy="3.4" r=".6" fill="#d8d8d8"/></svg>
<svg class="a" style="left:5px;top:268px" width="16" height="16"><rect x="8.6" y="0.2" width="7.3" height="6" fill="#ababab"/><rect x="0" y="10.4" width="5.6" height="5.4" fill="#ababab"/><path d="M.2 7.9v2.4l4.3.2 1.3 1.3.4 3.9h3.2l.4-3.3 1.2.3 1.5 1.8h2.6l.1-1.5-2.2-.1-.8-1.4.3-.8h3.1v-2.8l-4.1-.2-1.5-1.6-.2-4-2.4-.4-1 3.8-1.4.8-1 1.4z" fill="#9c2412"/><path d="M3.4 3.6l1.6-.4 1.6 1.4.4 1.6-1.8.6-1.2-1.6z" fill="#9c2412"/><circle cx="4.4" cy="1.6" r="0.9" fill="#9c2412"/><circle cx="2" cy="3.1" r="0.9" fill="#e08a2a"/><circle cx="3.1" cy="5.5" r="0.9" fill="#e08a2a"/><circle cx="3.6" cy="3.4" r=".6" fill="#d8d8d8"/></svg>
<svg class="a" style="left:836px;top:366px" width="16" height="16"><path d="M0 .5h10.5M15.5 5v11" stroke="#222" stroke-width="1" stroke-dasharray="1.6 1.4" fill="none"/><rect x="12.6" y="14.6" width="1" height="1" fill="#222"/><rect x=".6" y="4.6" width="11" height="10.8" fill="#fcfcfc" stroke="#5c5c5c" stroke-width="1.2"/><path d="M1.2 14.8v-4.2c.8-1.6 2.6-1.8 3.6-.4l1.4 1.6c.8-1.4 2.8-1.6 3.8 0v3z" fill="#3f9f50"/><circle cx="7.2" cy="7.6" r="1.5" fill="#f2a340"/><path d="M10 6l5-5M11.2 .8h4v4" stroke="#3d86e0" stroke-width="1.3" fill="none"/></svg>
<svg class="a" style="left:836px;top:396px" width="16" height="16"><path d="M6.4.6h-5.8v14.8h5.8v-5h2.2v-4.8h-2.2z" fill="none" stroke="#b5652a" stroke-width="1.2"/><path d="M8.2.6h7.2v14.8h-7.2" fill="none" stroke="#3d86e0" stroke-width="1.2"/><path d="M8.8 4.6l3.6 3.4" stroke="#8a8a8a" stroke-width="1.3" fill="none"/><path d="M12.4 8l-3.6 3.4" stroke="#f0a040" stroke-width="1.3" fill="none"/></svg>
<svg class="a" style="left:836px;top:426px" width="16" height="16"><path d="M6.6.6h-4.6v9.8h6M6.6.6l3 3" fill="none" stroke="#444" stroke-width="1.2"/><path d="M6.6.6v3h3z" fill="#444"/><path d="M1.4 12.4h13v3h-13z" fill="#fcfcfc" stroke="#3d86e0" stroke-width="1.2"/><path d="M2.4 13.9h3.6" stroke="#aaa" stroke-width="1.2"/><path d="M7.6 12.6l6.2-10.8 1.6 1-6.2 10.6z" fill="#fcfcfc" stroke="#3d86e0" stroke-width="1.1"/></svg>
<svg class="a" style="left:836px;top:456px" width="16" height="16"><path d="M1.6.6h9.6l3.6 3.6v11.2h-13.2z" fill="#fcfcfc" stroke="#4a4a4a" stroke-width="1.3"/><path d="M11 .6v3.8h3.8z" fill="#4a4a4a"/><path d="M3.4 3.6h6M3.4 5.6h9.4M3.4 7.6h9.4M3.4 9.6h9.4M3.4 11.6h9.4M3.4 13.4h9.4" stroke="#9a9a9a" stroke-width=".9"/></svg>
<svg class="a" style="left:836px;top:486px" width="16" height="16"><rect x=".6" y=".6" width="14.8" height="14.8" fill="#fcfcfc" stroke="#555" stroke-width="1.2"/><rect x="2" y="2" width="4" height="4" fill="#3f9f50"/><rect x="6" y="2" width="4" height="4" fill="#f6ad60"/><rect x="10" y="2" width="4" height="4" fill="#b5652a"/><rect x="2" y="6" width="4" height="4" fill="#f6ad60"/><rect x="6" y="6" width="4" height="4" fill="#3d86e0"/><rect x="10" y="6" width="4" height="4" fill="#aaaaaa"/><rect x="2" y="10" width="4" height="4" fill="#28a8c0"/><rect x="6" y="10" width="4" height="4" fill="#fadb80"/><rect x="10" y="10" width="4" height="4" fill="#8e62a6"/></svg>
<svg class="a" style="left:836px;top:516px" width="17" height="17"><circle cx="7" cy="7" r="7" fill="#4a90e2"/><path d="M6.2 5h1.8v7h-1.8z" fill="#fcfcfc"/><circle cx="7.1" cy="3" r="1" fill="#fcfcfc"/><circle cx="12.4" cy="12" r="4.2" fill="#fcfcfc"/><path d="M9.6 9.2l5.8 5.8M15.4 9.2l-5.8 5.8" stroke="#b5552a" stroke-width="1.6"/></svg>
<svg class="a" style="left:836px;top:570px" width="16" height="16"><rect x="2.6" y="2.6" width="11" height="11" fill="#fcfcfc"/><path d="M2.2 13.6v-4c.8-1.6 2.6-1.8 3.6-.4l1.4 1.6c.8-1.4 2.8-1.6 3.8 0l2 2.8z" fill="#3f9f50"/><circle cx="10.4" cy="5.4" r="1.5" fill="#f2a340"/><path d="M2.6 2.6h13.4M13.4 0v13.4M0 13.4h13.4M2.6 2.6v13.4" fill="none" stroke="#5c5c5c" stroke-width="1.2"/></svg>
<svg class="a" style="left:836px;top:600px" width="17" height="17"><path d="M2.6 6a6.7 6.7 0 1 1-.8 5.6" fill="none" stroke="#3d8de2" stroke-width="1.8"/><path d="M.2.4l1.6 0 .2 4.6 4.4.2v1.6h-6.2z" fill="#3d8de2"/></svg>
<svg class="a" style="left:836px;top:630px" width="16" height="16"><path d="M0 15h7v-15z" fill="#666"/><path d="M9 0v15h7z" fill="#8e679f"/></svg>
<svg class="a" style="left:836px;top:660px" width="17" height="16"><path d="M1 0v7h15z" fill="#666"/><path d="M1 9h15l-15 7z" fill="#8e679f"/></svg>
<span class="t" style="left:30.4px;top:8.0px;letter-spacing:-0.070px;color:#9a9a9a;">Image Tuner</span>
<span class="t" style="left:8.5px;top:33.0px;letter-spacing:-0.461px;color:#5a5a5a;">File</span>
<span class="t" style="left:40.0px;top:33.0px;letter-spacing:-0.172px;color:#5a5a5a;">Edit</span>
<span class="t" style="left:74.4px;top:33.0px;letter-spacing:-0.618px;color:#5a5a5a;">Tasks</span>
<span class="t" style="left:116.7px;top:33.0px;letter-spacing:-0.374px;color:#5a5a5a;">View</span>
<span class="t" style="left:155.0px;top:33.0px;letter-spacing:-0.022px;color:#5a5a5a;">Help</span>
<span class="t" style="left:41.5px;top:63.0px;letter-spacing:-0.580px;">Process</span>
<span class="t" style="left:7.4px;top:95.0px;letter-spacing:-0.104px;">Name</span>
<span class="t" style="left:280.3px;top:95.0px;letter-spacing:-0.160px;">Resolution</span>
<span class="t" style="left:397.2px;top:95.0px;letter-spacing:-0.329px;">Type</span>
<span class="t" style="left:533.3px;top:95.0px;letter-spacing:-0.447px;">Path</span>
<span class="t" style="left:830.4px;top:95.0px;letter-spacing:-0.658px;">Tasks</span>
<span class="t" style="left:23.2px;top:117.0px;letter-spacing:-0.279px;">SampleImage_01.webp</span>
<span class="t" style="left:280.3px;top:117.0px;letter-spacing:-0.764px;">550x368</span>
<span class="t" style="left:397.2px;top:117.0px;letter-spacing:-0.376px;">IrfanView WEBP File</span>
<span class="t" style="left:533.2px;top:117.0px;letter-spacing:-0.182px;">E:\Sample Images\</span>
<span class="t" style="left:23.2px;top:136.0px;letter-spacing:-0.279px;">SampleImage_03.jpg</span>
<span class="t" style="left:280.3px;top:136.0px;letter-spacing:-0.715px;">1584x820</span>
<span class="t" style="left:397.2px;top:136.0px;letter-spacing:-0.420px;">IrfanView JPG File</span>
<span class="t" style="left:533.2px;top:136.0px;letter-spacing:-0.182px;">E:\Sample Images\</span>
<span class="t" style="left:23.2px;top:155.0px;letter-spacing:-0.258px;">SampleImage_04.bmp</span>
<span class="t" style="left:280.3px;top:155.0px;letter-spacing:-0.807px;">794x529</span>
<span class="t" style="left:397.2px;top:155.0px;letter-spacing:-0.217px;">IrfanView BMP File</span>
<span class="t" style="left:533.2px;top:155.0px;letter-spacing:-0.182px;">E:\Sample Images\</span>
<span class="t" style="left:23.2px;top:174.0px;letter-spacing:-0.290px;">SampleImage_05.png</span>
<span class="t" style="left:280.3px;top:174.0px;letter-spacing:-0.807px;">406x280</span>
<span class="t" style="left:397.2px;top:174.0px;letter-spacing:-0.278px;">IrfanView PNG File</span>
<span class="t" style="left:533.2px;top:174.0px;letter-spacing:-0.182px;">E:\Sample Images\</span>
<span class="t" style="left:23.2px;top:193.0px;letter-spacing:-0.265px;">SampleImage_06.dcm</span>
<span class="t" style="left:280.3px;top:193.0px;letter-spacing:-0.807px;">384x288</span>
<span class="t" style="left:397.2px;top:193.0px;letter-spacing:-0.208px;">IrfanView DCM File</span>
<span class="t" style="left:533.2px;top:193.0px;letter-spacing:-0.182px;">E:\Sample Images\</span>
<span class="t" style="left:23.2px;top:212.0px;letter-spacing:-0.235px;">SampleImage_07.tif</span>
<span class="t" style="left:280.3px;top:212.0px;letter-spacing:-0.743px;">1566x2700</span>
<span class="t" style="left:397.2px;top:212.0px;letter-spacing:-0.255px;">IrfanView TIF File</span>
<span class="t" style="left:533.2px;top:212.0px;letter-spacing:-0.182px;">E:\Sample Images\</span>
<span class="t" style="left:23.2px;top:231.0px;letter-spacing:-0.323px;">SampleImage_08.jp2</span>
<span class="t" style="left:280.3px;top:231.0px;letter-spacing:-0.743px;">1683x1080</span>
<span class="t" style="left:397.2px;top:231.0px;letter-spacing:-0.372px;">IrfanView JP2 File</span>
<span class="t" style="left:533.2px;top:231.0px;letter-spacing:-0.182px;">E:\Sample Images\</span>
<span class="t" style="left:23.2px;top:250.0px;letter-spacing:-0.271px;">SampleImage_09.gif</span>
<span class="t" style="left:280.3px;top:250.0px;letter-spacing:-0.765px;">1024x768</span>
<span class="t" style="left:397.2px;top:250.0px;letter-spacing:-0.334px;">IrfanView GIF File</span>
<span class="t" style="left:533.2px;top:250.0px;letter-spacing:-0.182px;">E:\Sample Images\</span>
<span class="t" style="left:23.2px;top:269.0px;letter-spacing:-0.182px;">SampleImage_10.tiff</span>
<span class="t" style="left:280.3px;top:269.0px;letter-spacing:-0.764px;">530x368</span>
<span class="t" style="left:846.6px;top:117.0px;letter-spacing:-0.694px;">Resize (50%)</span>
<span class="t" style="left:846.6px;top:136.0px;letter-spacing:-0.251px;">Convert (PNG)</span>
<span class="t" style="left:846.6px;top:155.0px;letter-spacing:-0.249px;">Rename (&quot;Image_&quot;)</span>
<span class="t" style="left:846.6px;top:174.0px;letter-spacing:-0.160px;">Watermark (Text)</span>
<span class="t" style="left:846.6px;top:193.0px;letter-spacing:-0.301px;">Remove info (EXIF, XMP)</span>
<span class="t" style="left:846.6px;top:212.0px;letter-spacing:-0.416px;">Crop (16, 24, 16, 24)</span>
<span class="t" style="left:845.6px;top:338.0px;letter-spacing:-0.152px;">Image</span>
<span class="t" style="left:845.7px;top:542.0px;letter-spacing:-0.137px;">Transform</span>
<span class="t" style="left:845.5px;top:686.0px;letter-spacing:-0.296px;">Effects</span>
<span class="t" style="left:861.3px;top:366.0px;letter-spacing:-0.765px;">Resize</span>
<span class="t" style="left:861.3px;top:396.0px;letter-spacing:-0.047px;">Convert</span>
<span class="t" style="left:861.3px;top:426.0px;letter-spacing:-0.477px;">Rename</span>
<span class="t" style="left:861.3px;top:456.0px;letter-spacing:-0.070px;">Watermark</span>
<span class="t" style="left:861.3px;top:486.0px;letter-spacing:-0.108px;">ICC profile</span>
<span class="t" style="left:861.3px;top:516.0px;letter-spacing:-0.089px;">Remove info</span>
<span class="t" style="left:861.3px;top:570.0px;letter-spacing:-0.179px;">Crop</span>
<span class="t" style="left:861.3px;top:600.0px;letter-spacing:-0.293px;">Rotate</span>
<span class="t" style="left:861.3px;top:630.0px;letter-spacing:-0.114px;">Flip vertical</span>
<span class="t" style="left:861.3px;top:660.0px;letter-spacing:-0.020px;">Flip horizontal</span>
<span class="t" style="left:3.1px;top:789.0px;letter-spacing:-0.250px;">9 images</span>
<svg class="a" style="left:900px;top:0" width="134" height="31"><path d="M14 15.5h10M59.5 10.5h9v9h-9zM105.5 10.5l9.5 9.5M115 10.5l-9.5 9.5" fill="none" stroke="#999" stroke-width="1"/></svg>
<div class="a" style="left:302px;top:273px;width:437px;height:269px;background:#cfcfcf;border-radius:0 3px 4px 3px"></div>
<div class="a" style="left:303px;top:269px;width:430px;height:0;border-top:1px dashed #cdcdcd"></div>
<div class="a" style="left:298px;top:273px;width:0;height:262px;border-left:1px dashed #d2d2d2"></div>
<div class="a" style="left:300px;top:270px;width:434px;height:265px;box-sizing:border-box;border:1px solid #6a6a6a;background:#fcfcfc"></div>
<svg class="a" style="left:301px;top:301px;" width="432" height="233"><rect width="432" height="233" fill="url(#dz)"/></svg>
<div class="a" style="left:313px;top:401px;width:408px;height:16px;box-sizing:border-box;border:1px solid #bcbcbc;background:#e6f4e7"></div>
<div class="a" style="left:314px;top:402px;width:43px;height:14px;background:#0f8f1f"></div>
<div class="a" style="left:480px;top:488px;width:73px;height:23px;box-sizing:border-box;border:2px solid #1673d6;background:#e3e7e3"></div>
<svg class="a" style="left:482px;top:490px" width="69" height="19"><rect width="69" height="19" fill="url(#dg)"/></svg>
<span class="t" style="left:309.3px;top:278.0px;letter-spacing:-0.360px;">Processed: 5 of 9 (Errors: 0)</span>
<span class="t" style="left:313.4px;top:321.0px;letter-spacing:-0.289px;">Source: SampleImage_07.tif</span>
<span class="t" style="left:313.4px;top:342.0px;letter-spacing:-0.092px;">Output: Image_6.png</span>
<span class="t" style="left:313.8px;top:381.0px;letter-spacing:-0.165px;">Total:</span>
<span class="t" style="left:696.4px;top:381.0px;letter-spacing:-0.877px;">56%</span>
<span class="t" style="left:313.8px;top:437.0px;letter-spacing:-0.321px;">Time elapsed: 00:00</span>
<span class="t" style="left:498.5px;top:492.0px;letter-spacing:-0.293px;">Cancel</span>
<div class="a" style="left:0;top:0;width:1034px;height:806px;box-sizing:border-box;border:1px solid #a6a6a6;pointer-events:none"></div>
<svg class="a" style="left:1020px;top:792px" width="13" height="13"><path d="M9 3h2v2h-2zM9 6h2v2h-2zM6 6h2v2h-2zM9 9h2v2h-2zM6 9h2v2h-2zM3 9h2v2h-2z" fill="#a796a9"/></svg>
</body></html>
